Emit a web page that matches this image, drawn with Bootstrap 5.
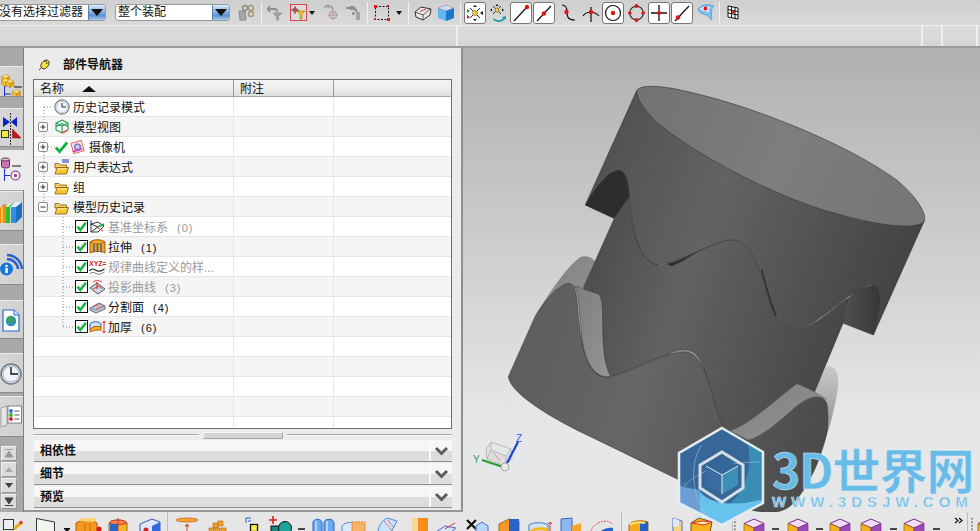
<!DOCTYPE html>
<html lang="zh">
<head>
<meta charset="utf-8">
<title>部件导航器</title>
<link href="https://cdn.jsdelivr.net/npm/bootstrap@5.3.0/dist/css/bootstrap.min.css" rel="stylesheet">
<style>
html,body{margin:0;width:980px;height:531px;overflow:hidden;background:#d8d8d8}
body{font:12px/1 "Liberation Sans","Noto Sans CJK SC",sans-serif;color:#111}
.app{position:relative;width:980px;height:531px;overflow:hidden}
svg{display:block;flex:none}
.flex-none{flex:none}
/* toolbars */
.bar1{height:26px;background:linear-gradient(#cfcfcf,#dadada);border-bottom:1px solid #f0f0f0}
.bar2{height:22px;background:linear-gradient(#dcdcdc,#d6d6d6);border-bottom:2px solid #9b9b9b}
.bar2 i{display:block;width:2px;height:20px;background:#efefef;position:absolute;top:26px}
.dv1{left:456px}.dv2{left:921px}.dv3{left:941px}.dv4{left:976px}
.combo{height:17px;background:#fff;border:1px solid #9a9a9a;border-radius:3px;overflow:hidden;flex:none;white-space:nowrap}
.combo1{width:109px;margin-left:-3px}
.combo2{width:115px;margin-left:9px;margin-right:5px}
.combo span{flex:1;padding-left:1px;line-height:15px}
.combo2 span{padding-left:2px}
.combo b{display:flex;align-items:center;justify-content:center;width:17px;height:100%;background:linear-gradient(#dcebfb,#5d93d3 70%,#a9c9ec);border-left:1px solid #5580b0}
.combo b::after{content:"";border:6px solid transparent;border-top:7px solid #111;border-bottom:0}
.tool{width:23px;height:24px;display:flex;align-items:center;justify-content:center;flex:none}
.tbtn{width:22px;height:22px;margin:1px 0 0 0;margin-right:1px;padding:0;background:#fff;border:1px solid #777;border-radius:3px;display:flex;align-items:center;justify-content:center;flex:none}
.tbtn:hover{background:#fff;border-color:#777}
.drop{width:8px;height:24px;flex:none;display:flex;align-items:center;justify-content:center}
.drop::after{content:"";border:3.5px solid transparent;border-top:4px solid #111;border-bottom:0}
.tsep{width:1px;height:22px;background:#f2f2f2;flex:none}
.m2{margin-left:2px}.m3{margin-left:3px}.m5{margin-left:5px}.mn2{margin-left:-2px}
/* rail */
.main{height:464px}
.rail{width:24px;flex:none;background:#a9a9a9;border-right:1px solid #7f7f7f;padding-top:18px}
.rtile{width:23px;background:linear-gradient(90deg,#d6d6d6,#d0d0d0);border-top:1px solid #ececec;border-bottom:1px solid #8a8a8a;overflow:hidden;flex:none}
.r1{height:31px}.r2{height:39px;margin-top:11px}.r3{height:40px;margin-top:3px;background:#ececec;border:0;width:24px}
.r4{height:40px;margin-top:1px}.r5{height:41px;margin-top:13px}.r6{height:39px;margin-top:15px}
.r7{height:40px;margin-top:14px}.r8{height:41px;margin-top:3px}
.rarrows{margin-top:9px;gap:1px;padding-left:1px}
.rarrows span{display:flex;align-items:center;justify-content:center;width:16px;height:15px;background:#dcdcdc;border:1px solid #f2f2f2;border-right-color:#999;border-bottom-color:#999}
/* navigator */
.panel{width:439px;flex:none;background:#ebebeb;border-right:2px solid #8f8f8f;border-bottom:2px solid #979797;padding:1px 0 0 9px;margin-top:0}
.phead{height:30px;gap:12px;padding-left:5px;font-weight:700}
.phead span{padding-top:2px}
.tbox{position:relative;width:419px;height:350px;background:#fff;border:1px solid #6f6f6f;flex:none;overflow:hidden}
.thead{height:17px;background:linear-gradient(#f4f4f4,#f0f0f0 45%,#dfdfdf);border-bottom:1px solid #a6a6a6}
.thead>div{height:100%;display:flex;align-items:center;border-right:1px solid #9a9a9a;padding-left:6px;padding-top:1px}
.c1{width:200px;flex:none}.c2{width:100px;flex:none}
.thead>div:last-child{flex:1;border:0}
.sortup{border:7px solid transparent;border-bottom:6px solid #111;border-top:0;margin-left:18px;width:0;height:0}
.trow{height:20px;border-bottom:1px solid #e6e6e6}
.trow:nth-child(odd){background:#f5f5f5}
.tcell{height:100%;border-right:1px solid #e6e6e6;display:flex;align-items:center;white-space:nowrap}
.tcell>span{padding-top:2px}
.lv0{padding-left:4px}.lv1{padding-left:41px}
.exp{width:10px;height:10px;margin-right:6px;position:relative;z-index:2}
.noexp{width:16px;flex:none}
.gap1{margin-right:3px}
.lv1 .gap1{margin-right:1px}
.ml2{margin-left:2px}
.off{color:#9a9a9a}
.cnt{font-size:11px;margin-left:9px;letter-spacing:1px}
.lines{position:absolute;left:0;top:0;pointer-events:none;z-index:1}
.hscroll{height:10px;margin-top:1px;width:419px;flex:none}
.hscroll u{display:block;flex:1;height:2px;background:#a9a9a9;border-bottom:1px solid #f8f8f8;text-decoration:none}
.hscroll s{display:block;width:80px;height:7px;margin:0 4px;background:#d4d4d4;border:1px solid #aaa;border-top-color:#f5f5f5;border-left-color:#f5f5f5}
.accs{width:418px;gap:1px;margin-left:1px}
.acc{height:22px;background:linear-gradient(#f6f6f6 50%,#dcdcdc 55%,#dedede);border-bottom:1px solid #8f8f8f;font-weight:700}
.acc span{padding-left:6px;flex:1;font-size:12px}
.acc em{width:23px;height:100%;border-left:2px solid #fafafa;display:flex;align-items:center;justify-content:center}
/* viewport */
.view{flex:1;background:linear-gradient(#b0b0b0,#e6e7e9 80%);position:relative;overflow:hidden}
.view svg{position:absolute;left:0;top:0}
/* bottom bar */
.bar3{height:19px;background:#e6e6e6;overflow:hidden}
.bsep{width:1px;height:19px;background:#bdbdbd;flex:none}
/* watermark */
.wmhex{position:absolute;left:675px;top:425px;z-index:5}
.wmtext{position:absolute;left:772px;top:445px;z-index:5;color:#69bbe7;font-weight:700;-webkit-text-stroke:.5px #dbeaf3;white-space:nowrap}
.wmbig{font-size:48px;line-height:46px;letter-spacing:-1px;font-family:"Noto Sans CJK SC",sans-serif}
.wmsmall{font-size:15px;line-height:15px;letter-spacing:5px;font-family:"Liberation Sans",sans-serif;margin-top:3px}
</style>
</head>
<body>
<svg width="0" height="0" class="position-absolute">
<defs>
<symbol id="chk" viewBox="0 0 13 13"><rect x=".5" y=".5" width="12" height="12" fill="#fff" stroke="#111"/><path d="M2.5 6.5 5.3 10 10.8 2.8" fill="none" stroke="#15b43c" stroke-width="2.6"/></symbol>
<symbol id="plus" viewBox="0 0 10 10"><rect x=".5" y=".5" width="9" height="9" rx="1.5" fill="#fff" stroke="#8a8a8a"/><path d="M2.5 5h5M5 2.5v5" stroke="#333"/></symbol>
<symbol id="minus" viewBox="0 0 10 10"><rect x=".5" y=".5" width="9" height="9" rx="1.5" fill="#fff" stroke="#8a8a8a"/><path d="M2.5 5h5" stroke="#333"/></symbol>
<symbol id="fold" viewBox="0 0 15 14"><path d="M1 2.5h4l1.5 1.5h6v3H1z" fill="#f6cf63" stroke="#7d5a10" stroke-width=".8"/><path d="M1 13 3 6.5h11.5L12.5 13z" fill="#f8c52e" stroke="#7d5a10" stroke-width=".8"/><path d="M3.2 8h9.5" stroke="#fff0b0"/></symbol>
<symbol id="cube3" viewBox="0 0 10 10"><path d="M5 .5 9.5 2.8 5 5 .5 2.8z" fill="#ffe27a" stroke="#b7861a" stroke-width=".6"/><path d="M.5 2.8 5 5v4.5L.5 7.2z" fill="#f5c12e" stroke="#b7861a" stroke-width=".6"/><path d="M9.5 2.8 5 5v4.5l4.5-2.3z" fill="#e8a318" stroke="#b7861a" stroke-width=".6"/></symbol>
<symbol id="pcube" viewBox="0 0 22 20"><path d="M11 1 21 5.5 11 10 1 5.500z" fill="#f2dcf5" stroke="#7b2a8f"/><path d="M1 5.500 11 10v9L1 14.500z" fill="#f3b21f" stroke="#8a5a10" stroke-width=".7"/><path d="M21 5.500 11 10v9l10-4.500z" fill="#9b4bb5" stroke="#7b2a8f" stroke-width=".7"/></symbol>
<linearGradient id="gs" gradientUnits="userSpaceOnUse" x1="90" y1="700" x2="1300" y2="1050"><stop offset="0" stop-color="#5c5c5c"/><stop offset=".35" stop-color="#666"/><stop offset="1" stop-color="#3f3f3f"/></linearGradient>
<linearGradient id="gu" gradientUnits="userSpaceOnUse" x1="350" y1="200" x2="1300" y2="550"><stop offset="0" stop-color="#505050"/><stop offset=".4" stop-color="#636363"/><stop offset="1" stop-color="#434343"/></linearGradient>
<linearGradient id="gc" gradientUnits="userSpaceOnUse" x1="320" y1="600" x2="1100" y2="850"><stop offset="0" stop-color="#4d4d4d"/><stop offset=".35" stop-color="#626262"/><stop offset="1" stop-color="#454545"/></linearGradient>
<linearGradient id="gt" gradientUnits="userSpaceOnUse" x1="470" y1="60" x2="1330" y2="450"><stop offset="0" stop-color="#727272"/><stop offset=".5" stop-color="#7d7d7d"/><stop offset="1" stop-color="#757575"/></linearGradient>
<linearGradient id="gb" x1="0" y1="0" x2="1" y2="1"><stop offset="0" stop-color="#7d7d7d"/><stop offset="1" stop-color="#969696"/></linearGradient>
<linearGradient id="gr" x1="0" y1="0" x2="0" y2="1"><stop offset="0" stop-color="#c9c9c9"/><stop offset="1" stop-color="#8e8e8e"/></linearGradient>
<linearGradient id="gp" x1="0" y1="0" x2="1" y2="0"><stop offset="0" stop-color="#505050"/><stop offset="1" stop-color="#383838"/></linearGradient>
</defs>
</svg>

<div class="app d-flex flex-column">
  <!-- top toolbar -->
  <div class="bar1 d-flex align-items-center flex-none">
    <div class="combo combo1 d-flex"><span>没有选择过滤器</span><b></b></div>
    <div class="combo combo2 d-flex"><span>整个装配</span><b></b></div>
    <div class="tool"><svg width="17" height="17" viewBox="0 0 17 17"><path d="M1 7h6l1 9H2z" fill="#a8a8a8" stroke="#8a8a8a"/><circle cx="7" cy="4" r="2.500" fill="none" stroke="#8f8f8f" stroke-width="1.500"/><circle cx="13" cy="4" r="2.500" fill="none" stroke="#a89a78" stroke-width="1.500"/><circle cx="13" cy="10" r="2.500" fill="none" stroke="#a89a78" stroke-width="1.500"/><path d="M7 6.500v3M10 4h1" stroke="#8f8f8f"/></svg></div>
    <div class="tsep m3"></div>
    <div class="tool m2"><svg width="17" height="17" viewBox="0 0 17 17"><path d="M3 2 .5 5 3 8M1 5h7q2 0 2 3" fill="none" stroke="#85908f" stroke-width="1.800"/><path d="M6 9h9l-3.500 3.500V16h-2v-3.500z" fill="#aaa395" stroke="#8c8678" stroke-width=".6"/></svg></div>
    <div class="tool"><svg width="17" height="17" viewBox="0 0 17 17"><rect x=".5" y=".5" width="16" height="16" fill="#dcdcdc" stroke="#d4474f"/><path d="M1 6h8M5 2v8" stroke="#7a3a3a"/><circle cx="5" cy="6" r="2" fill="none" stroke="#a83a3a"/><path d="M7 7h8l-3 3.500V15H10v-4.500z" fill="#f2c018" stroke="#8c7a20" stroke-width=".6"/></svg></div>
    <div class="drop mn2"></div>
    <div class="tool m3"><svg width="17" height="17" viewBox="0 0 17 17"><path d="M2 4 4.500 1.500 7 4M4.500 2C8 1 11 3 11 6" fill="none" stroke="#9a9a9a" stroke-width="1.500"/><circle cx="11" cy="11" r="3.500" fill="none" stroke="#b59595" stroke-width="1.100"/><path d="M11 6v10M6 11h10" stroke="#b59595"/></svg></div>
    <div class="tool"><svg width="17" height="17" viewBox="0 0 17 17"><path d="M1 3h3l1-1h3l2 1 3 4-2 1-2-2H5L4 5H1z" fill="#8f8f8f"/><path d="M11 8h4v8h-4z" fill="#aaa395"/><path d="M7 8h3v3H7z" fill="#999"/></svg></div>
    <div class="tsep m2"></div>
    <div class="tool m2"><svg width="18" height="18" viewBox="0 0 18 18"><rect x="2.500" y="2.500" width="13" height="13" fill="none" stroke="#111" stroke-dasharray="2 1.500"/><g fill="#d81f1f"><rect x="1" y="1" width="3" height="3"/><rect x="14" y="14" width="3" height="3"/><rect x="14" y="1" width="2" height="2"/><rect x="1" y="14" width="2" height="2"/></g></svg></div>
    <div class="drop m2"></div>
    <div class="tsep m5"></div>
    <div class="tool m2"><svg width="18" height="18" viewBox="0 0 18 18"><path d="M1 8 7 3l10 2-1 6-7 5-7-3z" fill="#e8e8e8" stroke="#333"/><path d="M1 8l8 3 7-6M9 11v5" fill="none" stroke="#333" stroke-width=".8"/><path d="M6 7.500 12 5" stroke="#d33"/></svg></div>
    <div class="tool"><svg width="18" height="18" viewBox="0 0 18 18"><path d="M9 1 17 4v10l-8 3-8-3V4z" fill="#62b8ee"/><path d="M9 1 17 4 9 7 1 4z" fill="#bfe6fb" stroke="#e65a6a" stroke-width=".5"/><path d="M9 7v10l8-3V4z" fill="#1c79c8"/></svg></div>
    <div class="tsep m3"></div>
    <button type="button" class="btn tbtn m3"><svg width="18" height="18" viewBox="0 0 18 18"><path d="M9 9 4 4M9 9l5-5M9 9l-5 5M9 9l5 5" stroke="#333"/><circle cx="9" cy="9" r="2.500" fill="#f6d42a" stroke="#555" stroke-width=".6"/><path d="M9 1 7 3h4zM9 17l-2-2h4z" fill="#111"/><path d="M1 5v4l3-2z" fill="#1aa83a"/><path d="M1 11v4l3-2z" fill="#d81f1f"/><path d="M17 7v4l-3-2z" fill="#111"/></svg></button>
    <div class="tool"><svg width="17" height="18" viewBox="0 0 17 18"><path d="M7 6 3 2M7 6l4-4M7 6 3 10M7 6l4 4" stroke="#333"/><circle cx="7" cy="6" r="2" fill="#f6d42a" stroke="#555" stroke-width=".5"/><path d="M7 0 5.500 2h3zM0 6l2-1.500v3zM14 6l-2-1.500v3z" fill="#111"/><path d="M4 14c2 3 7 3 9 0l-1-1 4-1v4l-1-1c-3 4-10 4-12 0z" fill="#1f9da8"/></svg></div>
    <button type="button" class="btn tbtn"><svg width="18" height="18" viewBox="0 0 18 18"><path d="M2 17 15 3" stroke="#111" stroke-width="1.200"/><circle cx="15" cy="3" r="2.200" fill="#e01414"/></svg></button>
    <button type="button" class="btn tbtn"><svg width="18" height="18" viewBox="0 0 18 18"><path d="M2 17 16 2" stroke="#111" stroke-width="1.200"/><circle cx="9" cy="9.500" r="2.200" fill="#e01414"/></svg></button>
    <div class="tool"><svg width="16" height="18" viewBox="0 0 16 18"><path d="M2 1c2 0 5 1 5 7s2 8 8 8" fill="none" stroke="#111" stroke-width="1.200"/><circle cx="6.500" cy="8" r="2.200" fill="#e01414"/></svg></div>
    <div class="tool"><svg width="18" height="18" viewBox="0 0 18 18"><path d="M1 12c3-5 12-5 16 0M9 3v15" fill="none" stroke="#111" stroke-width="1.200"/><circle cx="9" cy="8" r="2.200" fill="#e01414"/></svg></div>
    <button type="button" class="btn tbtn"><svg width="18" height="18" viewBox="0 0 18 18"><circle cx="9" cy="9" r="7.500" fill="none" stroke="#111" stroke-width="1.200"/><circle cx="9" cy="9" r="2.200" fill="#e01414"/></svg></button>
    <div class="tool"><svg width="17" height="18" viewBox="0 0 17 18"><circle cx="8.500" cy="9" r="6.800" fill="none" stroke="#222" stroke-width="1.100"/><g fill="#e01414"><circle cx="8.500" cy="2" r="2"/><circle cx="8.500" cy="16" r="2"/><circle cx="1.800" cy="9" r="1.800"/><circle cx="15.200" cy="9" r="1.800"/></g></svg></div>
    <button type="button" class="btn tbtn"><svg width="18" height="18" viewBox="0 0 18 18"><path d="M9 1v16M1 9h16" stroke="#111" stroke-width="1.300"/><circle cx="9" cy="9" r="2" fill="#e01414"/></svg></button>
    <button type="button" class="btn tbtn"><svg width="18" height="18" viewBox="0 0 18 18"><path d="M2 17 16 2" stroke="#111" stroke-width="1.200"/><circle cx="5" cy="13.500" r="2.200" fill="#e01414"/></svg></button>
    <div class="tool"><svg width="18" height="18" viewBox="0 0 18 18"><path d="M1 5c4-5 11-5 16-3-3 2-3 7-2 14-1 0-3-4-6-5-3-1-7-2-8-6z" fill="#7cbdf2" stroke="#4a8fd4" stroke-width=".7"/><path d="M2.500 5c3-3 8-3 11-2-2 1-2 4-2 6-3-2-6-2-9-4z" fill="#d9ecfb"/><circle cx="8.500" cy="4.500" r="1.900" fill="#e01414"/></svg></div>
    <div class="tsep m2"></div>
    <div class="tool m2"><svg width="13" height="15" viewBox="0 0 13 15"><path d="M1 1 11 3v11L1 12z" fill="#fff" stroke="#111"/><path d="M1 4.500l10 2M1 8l10 2M4.500 1.800v10.800M8 2.400v10.900" stroke="#111"/><circle cx="6.500" cy="7" r="1.500" fill="#e01414"/></svg></div>
  </div>
  <div class="bar2 flex-none"><i class="dv1"></i><i class="dv2"></i><i class="dv3"></i><i class="dv4"></i></div>

  <div class="main d-flex flex-none">
    <!-- icon rail -->
    <div class="rail d-flex flex-column flex-none">
      <div class="rtile r1"><svg width="23" height="31" viewBox="0 66 23 31"><use href="#cube3" x="1" y="73" width="9" height="9"/><use href="#cube3" x="1" y="77" width="9" height="9"/><use href="#cube3" x="5.500" y="78" width="9" height="9"/><path d="M4.500 85v11M4.500 93H11" stroke="#1f2fc0"/><path d="M14 86h8" stroke="#111"/><use href="#cube3" x="12" y="88" width="9" height="9"/></svg></div>
      <div class="rtile r2"><svg width="23" height="39" viewBox="0 108 23 39"><path d="M10.500 112v34" stroke="#333" stroke-dasharray="2 1"/><path d="M3 116 10 121 3 126zM17 116 11 121 17 126z" fill="#0b1fc4"/><rect x="1.500" y="129.500" width="7" height="7" fill="#f7e634" stroke="#333"/><path d="M12.500 128 21 137H12.500z" fill="#c9141b" stroke="#7a1010" stroke-width=".5"/></svg></div>
      <div class="rtile r3"><svg width="24" height="40" viewBox="0 150 24 40"><path d="M1.500 159.500v7c0 2 8 2 8 0v-7z" fill="#c876b5" stroke="#60304f"/><ellipse cx="5.500" cy="159.500" rx="4" ry="1.500" fill="#e6bdd8" stroke="#60304f"/><path d="M12 166h9" stroke="#111"/><path d="M4.500 169v12M4.500 175.500H10" stroke="#1f2fc0" stroke-width="1.100"/><circle cx="15.500" cy="175.500" r="4.500" fill="none" stroke="#8e2c8e" stroke-width="1.100"/><circle cx="15.500" cy="175.500" r="1.500" fill="#8e2c8e"/></svg></div>
      <div class="rtile r4"><svg width="23" height="40" viewBox="0 191 23 40"><path d="M0 207l4-4h2v19H0z" fill="#f08a1a"/><path d="M2 206v16" stroke="#f7d24a" stroke-width="1.500"/><path d="M6 206l4-4h3l-3 4v16H6z" fill="#27c22a"/><path d="M6 206l4-4h2l-4 4z" fill="#fff"/><path d="M11 206h5v16h-5z" fill="#2f8fe0"/><path d="M11 206l5-5h6l-5 5z" fill="#e8f2fb"/><path d="M16 206l6-5v15l-6 6z" fill="#1c6ec0"/></svg></div>
      <div class="rtile r5"><svg width="23" height="41" viewBox="0 244 23 41"><path d="M7 254a15 15 0 0 1 15 14" fill="none" stroke="#2a62c8" stroke-width="2.500"/><path d="M7 258a11 11 0 0 1 11 10" fill="none" stroke="#2a62c8" stroke-width="2.500"/><circle cx="6.500" cy="268" r="6.500" fill="#1576dc"/><circle cx="6.500" cy="265" r="1.300" fill="#fff"/><rect x="5.300" y="267" width="2.500" height="5" fill="#fff"/></svg></div>
      <div class="rtile r6"><svg width="23" height="39" viewBox="0 300 23 39"><path d="M3 309h11l5 5v16H3z" fill="#fff" stroke="#1f6ad0" stroke-width="1.200"/><path d="M14 309v5h5" fill="#dbe9fa" stroke="#1f6ad0"/><circle cx="11" cy="320" r="5.200" fill="#2f8fbd"/><path d="M8 316c3-1 5 1 5 3s-3 3-4 2-3-3-1-5zM14 323c1 0 2-2 2-2" fill="#3aa83a" stroke="#3aa83a" stroke-width=".5"/></svg></div>
      <div class="rtile r7"><svg width="23" height="40" viewBox="0 353 23 40"><circle cx="11" cy="373" r="10" fill="#dfe7f2" stroke="#777" stroke-width="1.500"/><circle cx="11" cy="373" r="8" fill="#eef4fb" stroke="#9fb5d4"/><path d="M11 366v7h7" fill="none" stroke="#111" stroke-width="1.400"/></svg></div>
      <div class="rtile r8"><svg width="23" height="41" viewBox="0 396 23 41"><path d="M1 407l6-2v19l-6 2z" fill="#e6e6e6" stroke="#888" stroke-width=".7"/><rect x="8" y="405" width="13.500" height="17" fill="#fff" stroke="#555" stroke-width=".7"/><circle cx="11" cy="410" r="1.900" fill="#2a6ce0"/><circle cx="11" cy="414" r="1.900" fill="#2fb52f"/><circle cx="11" cy="418" r="1.900" fill="#d81f1f"/><path d="M14.500 410h5M14.500 414h5M14.500 418h5" stroke="#555"/></svg></div>
      <div class="rarrows d-flex flex-column">
        <span><svg width="10" height="9" viewBox="0 0 10 9"><path d="M1 .5h8M5 2 1 8h8z" fill="#999" stroke="#999"/></svg></span>
        <span><svg width="10" height="9" viewBox="0 0 10 9"><path d="M5 2 1 7h8z" fill="#aaa"/></svg></span>
        <span><svg width="10" height="9" viewBox="0 0 10 9"><path d="M5 7 1 2h8z" fill="#444"/></svg></span>
        <span><svg width="10" height="9" viewBox="0 0 10 9"><path d="M1 8.500h8M5 7 1 1h8z" fill="#444" stroke="#444"/></svg></span>
      </div>
    </div>

    <!-- part navigator -->
    <div class="panel d-flex flex-column flex-none">
      <div class="phead d-flex align-items-center flex-none">
        <svg width="13" height="13" viewBox="0 0 13 13"><path d="M1 12l2-2" stroke="#333"/><path d="M3 9c-1-3 2-6 5-7 2 0 3 1 3 3 0 3-3 6-6 6z" fill="#f6e23a" stroke="#333"/><path d="M6 3c2 0 3 1 3 3" stroke="#333" fill="none"/></svg>
        <span>部件导航器</span>
      </div>
      <div class="tbox d-flex flex-column">
        <div class="thead d-flex flex-none"><div class="c1"><span>名称</span><span class="sortup"></span></div><div class="c2">附注</div><div></div></div>
        <div class="tbody">
          <svg class="lines" width="416" height="348" viewBox="34 80 416 348"><g stroke="#8a8a8a" stroke-dasharray="1 2" fill="none"><path d="M44 107v100M44 107h9M48 147h7M63 217v110M63 227h11M63 247h11M63 267h11M63 287h11M63 307h11M63 327h11"/></g></svg>
          <div class="trow d-flex"><div class="tcell c1 lv0"><span class="noexp"></span><svg class="gap1" width="16" height="16" viewBox="0 0 16 16"><circle cx="8" cy="8" r="7.200" fill="#dfe7f2" stroke="#666"/><circle cx="8" cy="8" r="5.500" fill="#f4f8fc" stroke="#9fb5d4" stroke-width=".7"/><path d="M8 4v4h4" fill="none" stroke="#222"/></svg><span>历史记录模式</span></div><div class="tcell c2"></div></div>
          <div class="trow d-flex"><div class="tcell c1 lv0"><svg class="exp"><use href="#plus"/></svg><svg class="gap1" width="16" height="16" viewBox="0 0 16 16"><path d="M8 1 14 4v7l-6 3-6-3V4zM2 4l6 3 6-3M8 7v7M2 7.500l6-3 6 3" fill="none" stroke="#18a04c" stroke-width="1.100"/><path d="M8 14l5-2.500" stroke="#e2503a" stroke-width="1.400"/></svg><span>模型视图</span></div><div class="tcell c2"></div></div>
          <div class="trow d-flex"><div class="tcell c1 lv0"><svg class="exp"><use href="#plus"/></svg><svg width="15" height="14" viewBox="0 0 16 14"><path d="M2 7.500 6 12 14 2" fill="none" stroke="#12b23a" stroke-width="3"/></svg><svg class="gap1" width="17" height="16" viewBox="0 0 18 16"><path d="M2 4l11-3 3 11-11 3z" fill="#fbe2ef" stroke="#ef5a4a"/><circle cx="9" cy="8" r="3.500" fill="#8fa8d8" stroke="#6a4aa8" stroke-width=".7"/><circle cx="9" cy="8" r="1.500" fill="#dde"/><path d="M4 13l10-3" stroke="#d02fc0" stroke-width="1.500"/></svg><span>摄像机</span></div><div class="tcell c2"></div></div>
          <div class="trow d-flex"><div class="tcell c1 lv0"><svg class="exp"><use href="#plus"/></svg><svg class="gap1" width="16" height="16" viewBox="0 0 16 16"><use href="#fold" y="2" width="15" height="14"/><path d="M8 1h7M8 3h7" stroke="#1f2fc0"/></svg><span>用户表达式</span></div><div class="tcell c2"></div></div>
          <div class="trow d-flex"><div class="tcell c1 lv0"><svg class="exp"><use href="#plus"/></svg><svg class="gap1" width="16" height="16" viewBox="0 0 16 16"><use href="#fold" y="2" width="15" height="14"/></svg><span>组</span></div><div class="tcell c2"></div></div>
          <div class="trow d-flex"><div class="tcell c1 lv0"><svg class="exp"><use href="#minus"/></svg><svg class="gap1" width="16" height="16" viewBox="0 0 16 16"><use href="#fold" y="2" width="15" height="14"/></svg><span>模型历史记录</span></div><div class="tcell c2"></div></div>
          <div class="trow d-flex"><div class="tcell c1 lv1"><svg class="gap1" width="13" height="13"><use href="#chk"/></svg><svg width="17" height="16" viewBox="0 0 17 16"><path d="M2 1v5" stroke="#1f2fc0"/><path d="M2 5 9 8 2 13z M2 5l7-2 6 4-6 6-7 0" fill="none" stroke="#333"/><path d="M9 8l6-3" stroke="#1a9a3a" stroke-width="1.500"/><path d="M9 9l5 3" stroke="#c33"/></svg><span class="off ml2">基准坐标系<span class="cnt">(0)</span></span></div><div class="tcell c2"></div></div>
          <div class="trow d-flex"><div class="tcell c1 lv1"><svg class="gap1" width="13" height="13"><use href="#chk"/></svg><svg width="17" height="16" viewBox="0 0 17 16"><path d="M1 3c4-3 11-3 15 0v11c-4-2-11-2-15 0z" fill="#f7a51c" stroke="#a25a10"/><path d="M1 3c4 2 11 2 15 0" fill="#ffd65a" stroke="#a25a10"/><path d="M5 5v8M8.500 5v8M12 5v8" stroke="#1c5ab8" stroke-width="1.300"/></svg><span class="ml2">拉伸<span class="cnt">(1)</span></span></div><div class="tcell c2"></div></div>
          <div class="trow d-flex"><div class="tcell c1 lv1"><svg class="gap1" width="13" height="13"><use href="#chk"/></svg><svg width="17" height="16" viewBox="0 0 17 16"><path d="M.5 12c3-4 5-1 8 0s5-1 7-2" fill="none" stroke="#222" stroke-width="1.200"/><path d="M.5 15c3-3 5-1 8 0s5-1 7-2" fill="none" stroke="#222" stroke-width=".6"/><text x="0" y="7" font-size="7" font-weight="700" fill="#d02020" font-family="Liberation Sans">XYZ=</text></svg><span class="off ml2">规律曲线定义的样...</span></div><div class="tcell c2"></div></div>
          <div class="trow d-flex"><div class="tcell c1 lv1"><svg class="gap1" width="13" height="13"><use href="#chk"/></svg><svg width="17" height="16" viewBox="0 0 17 16"><path d="M1 9 8 4l8 6-7 5z" fill="#cfd9ea" stroke="#555"/><path d="M4 3c3-2 6-2 9 0" fill="none" stroke="#d33"/><path d="M8 3v7" stroke="#d33" stroke-width="1.200"/><path d="M4 10l6-3 3 3" fill="none" stroke="#d33"/></svg><span class="off ml2">投影曲线<span class="cnt">(3)</span></span></div><div class="tcell c2"></div></div>
          <div class="trow d-flex"><div class="tcell c1 lv1"><svg class="gap1" width="13" height="13"><use href="#chk"/></svg><svg width="17" height="16" viewBox="0 0 17 16"><path d="M1 9 10 4l6 3v3l-9 4-6-3z" fill="#b9c8dc" stroke="#667"/><path d="M1 9l6 2 9-4" fill="none" stroke="#889"/><path d="M4 8l7-3" stroke="#e06a60"/><path d="M7 10l7-3" stroke="#e06a60"/></svg><span class="ml2">分割面<span class="cnt">(4)</span></span></div><div class="tcell c2"></div></div>
          <div class="trow d-flex"><div class="tcell c1 lv1"><svg class="gap1" width="13" height="13"><use href="#chk"/></svg><svg width="17" height="16" viewBox="0 0 17 16"><path d="M1 5c2-3 9-3 11 0v3c-4-1-8-1-11 3z" fill="#cfe3f5" stroke="#2a62a8"/><path d="M1 11c3-4 7-4 11-3v3c-4 0-8 0-11 2z" fill="#f7b71c" stroke="#c05a10"/><path d="M15 2v12M13.500 4 15 2l1.500 2M13.500 12 15 14l1.500-2" fill="none" stroke="#d33"/></svg><span class="ml2">加厚<span class="cnt">(6)</span></span></div><div class="tcell c2"></div></div>
          <div class="trow d-flex"><div class="tcell c1"></div><div class="tcell c2"></div></div>
          <div class="trow d-flex"><div class="tcell c1"></div><div class="tcell c2"></div></div>
          <div class="trow d-flex"><div class="tcell c1"></div><div class="tcell c2"></div></div>
          <div class="trow d-flex"><div class="tcell c1"></div><div class="tcell c2"></div></div>
          <div class="trow d-flex"><div class="tcell c1"></div><div class="tcell c2"></div></div>
        </div>
      </div>
      <div class="hscroll d-flex align-items-center"><u></u><s></s><u></u></div>
      <div class="accs d-flex flex-column">
        <div class="acc d-flex align-items-center"><span>相依性</span><em><svg width="15" height="10" viewBox="0 0 15 10"><path d="M2 2l5.500 5.500L13 2" fill="none" stroke="#5c5c5c" stroke-width="3"/></svg></em></div>
        <div class="acc d-flex align-items-center"><span>细节</span><em><svg width="15" height="10" viewBox="0 0 15 10"><path d="M2 2l5.500 5.500L13 2" fill="none" stroke="#5c5c5c" stroke-width="3"/></svg></em></div>
        <div class="acc d-flex align-items-center"><span>预览</span><em><svg width="15" height="10" viewBox="0 0 15 10"><path d="M2 2l5.500 5.500L13 2" fill="none" stroke="#5c5c5c" stroke-width="3"/></svg></em></div>
      </div>
    </div>

    <!-- 3D viewport -->
    <div class="view">
      <svg width="517" height="464" viewBox="463 48 517 464">
        <g transform="translate(480 70) scale(.33333)" stroke-linejoin="round">
          <!-- back walls of lower sleeve -->
          <path d="M165 740C200 680 260 590 300 562 320 552 340 565 345 575L310 655 240 655Z" fill="url(#gb)"/>
          <path d="M1040 888C1060 888 1072 895 1075 930 1076 960 1055 1060 1035 1110L1000 965Z" fill="url(#gr)"/>
          <!-- core -->
          <path d="M402 445 445 370 450 400C455 460 470 570 540 585 640 560 700 510 760 510 830 520 840 620 870 700 890 760 930 780 960 775 1020 760 1070 700 1110 680L1090 760 1005 965 950 1040 800 1150 500 1100 300 950 310 650Z" fill="url(#gc)"/>
          <!-- upper sleeve -->
          <path d="M470 62 316 405 402 445 445 375 418 300C440 305 445 340 450 400 455 460 470 570 530 585 640 565 700 510 760 510 830 520 840 620 870 700 890 760 930 780 960 775 1020 760 1110 660 1170 645 1195 650 1200 690 1195 730L1180 795 1333 452C1320 480 800 340 540 165 500 130 470 90 470 62Z" fill="url(#gu)" stroke="#333" stroke-width="2"/>
          <!-- left pocket -->
          <path d="M316 405C340 360 385 300 418 300 440 305 445 340 448 380L402 445Z" fill="#2d2d2d"/>
          <!-- right pocket -->
          <path d="M1110 680C1130 660 1170 640 1190 650 1200 670 1200 700 1195 730L1180 795 1090 760Z" fill="url(#gp)" stroke="#333" stroke-width="1.500"/>
          <path d="M560 582C600 575 640 550 685 528 650 545 620 570 575 588Z" fill="#2a2a2a"/>
          <path d="M845 600C855 640 870 690 888 738 870 700 860 650 845 600Z" fill="#2a2a2a" stroke="#2a2a2a" stroke-width="3"/>
          <!-- cap -->
          <path d="M470 62C480 45 530 45 600 60 800 100 1100 220 1250 330 1310 380 1340 430 1333 452 1320 480 1200 475 1000 410 800 340 620 230 540 165 500 130 470 90 470 62Z" fill="url(#gt)" stroke="#3a3a3a" stroke-width="2"/>
          <!-- lower sleeve front -->
          <path d="M85 920 165 740C200 680 245 640 268 640 290 645 290 680 298 760 310 880 340 925 385 922 450 905 530 860 590 845 640 835 670 880 690 950 710 1010 720 1075 750 1082 810 1080 890 1000 960 985 1010 970 1040 980 1042 1010 1048 1060 1040 1100 1029 1131 1010 1200 969 1270 940 1300 900 1340 840 1330 780 1310 700 1285 500 1180 300 1085 170 1020 90 960 85 920Z" fill="url(#gs)" stroke="#333" stroke-width="1.500"/>
          <!-- inner wall bands -->
          <path d="M285 648 355 672C365 680 368 700 368 760 368 830 372 880 392 920 350 925 325 890 312 840 300 790 300 690 285 648Z" fill="url(#gb)" stroke="#333" stroke-width="1.500"/>
          <path d="M560 853C590 838 630 830 650 855 665 875 672 895 680 915 665 880 640 840 605 846Z" fill="#8c8c8c" stroke="#333" stroke-width="1"/>
          <path d="M750 1082C810 1065 890 985 950 942 975 950 1005 965 1040 988 1005 970 975 985 930 1025 890 1060 845 1100 805 1110Z" fill="url(#gb)" stroke="#555" stroke-width="1"/>
        </g>
        <!-- triad -->
        <g fill="none">
          <path d="M491 442 511 449 512 459 505 466 487 459 486 449ZM491 442 491 450 506 456 511 449M491 450 487 459M506 456 505 466" stroke="#b9b9b9" fill="#dadada" fill-opacity=".7"/>
          <path d="M493 452 500 461" stroke="#d99a9a"/>
          <path d="M482 460 503 467" stroke="#2e9a2e" stroke-width="2"/>
          <path d="M507 463 518 442" stroke="#1342d8" stroke-width="2.200"/>
          <circle cx="505" cy="467" r="4" fill="#e8e8e8" stroke="#aaa"/>
        </g>
        <text x="516" y="442" font-size="10" fill="#2a5ae0" font-family="Liberation Sans">Z</text>
        <text x="473" y="463" font-size="10" fill="#3a9a5a" font-family="Liberation Sans">Y</text>
      </svg>
    </div>
  </div>

  <!-- bottom toolbar -->
  <div class="bar3 d-flex flex-none">
    <svg width="167" height="19" viewBox="0 513 167 19">
      <rect x="3.500" y="520.500" width="10" height="10" fill="#eee" stroke="#333"/><path d="M14 530l8-7" stroke="#e8a81c" stroke-width="3"/><path d="M20 524.500l2-2" stroke="#d33" stroke-width="3"/>
      <path d="M36.500 519.500 54.500 523V533H36.500z" fill="#eef6ee" stroke="#333"/>
      <path d="M64 530h6l-3 3z" fill="#111"/><path d="M64 529.500h6" stroke="#111"/>
      <path d="M76 524c3-3 19-3 21 0v9H76z" fill="#f39a1c" stroke="#b05a10"/><path d="M78 522l4-3h14l-2 4z" fill="#ffd271"/><path d="M85 524v9M90 524v9" stroke="#d06a14"/><circle cx="99" cy="530" r="2.500" fill="#e01414"/>
      <path d="M109 533v-9c2-4 16-4 18 0v9z" fill="#f4b428" stroke="#a86a14"/><path d="M109 524c2-4 16-4 18 0-4 2-14 2-18 0z" fill="#f58a4a" stroke="#c33"/><rect x="110" y="525" width="8" height="8" fill="#2a62c8"/><path d="M118 519v14" stroke="#c33"/>
      <path d="M140 525l12-5 8 3v11h-20z" fill="#dfe9fb" stroke="#3a5ab0"/><path d="M152 527l8-4v11h-8z" fill="#2f6ae0"/><circle cx="146" cy="531" r="2.500" fill="#d02020"/>
    </svg>
    <div class="bsep"></div>
    <svg width="453" height="19" viewBox="168 513 453 19">
      <ellipse cx="187" cy="521" rx="11" ry="2" fill="#f4a72a" stroke="#d0552a" stroke-width=".7"/><path d="M187 533v-8l-2 2h4l-2-2" fill="#f08a1a" stroke="#d0552a"/>
      <g fill="#f0a02a" stroke="#b06a14" stroke-width=".6"><rect x="213" y="524" width="5" height="5"/><rect x="218" y="522" width="5" height="5"/><rect x="209" y="529" width="5" height="5"/><rect x="215" y="529" width="5" height="5"/><rect x="221" y="529" width="5" height="5"/></g>
      <rect x="250.500" y="525.500" width="7" height="7" fill="#fbf04a" stroke="#111" stroke-width="1.300"/><path d="M246 519h5M246 519v5M248 522h3" stroke="#2a62c8" fill="none"/>
      <path d="M269 519h8M273 515v8" stroke="#d81f1f" stroke-width="1.600" transform="translate(0 2)"/><rect x="271" y="527" width="10" height="8" fill="#17877f" stroke="#111"/><circle cx="285" cy="529" r="6.500" fill="#1fa598" stroke="#111"/>
      <path d="M298 530h7M300 530h3" stroke="#111" stroke-width="1.500"/>
      <path d="M313 533v-9c0-5 9-5 9 0v9zM324 533v-9c0-5 10-5 10 0v9z" fill="#6aa8f2" stroke="#2a62c8"/><path d="M316 522v11M327 522v11" stroke="#fff"/>
      <path d="M342 527c3-4 10-4 14-3v10h-14z" fill="#d8eafb" stroke="#4a8ad4"/><rect x="352" y="523" width="13" height="10" fill="#f8b46a" stroke="#e87a1a" stroke-dasharray="2 1"/>
      <path d="M378 533c0-6 4-11 9-14l10 3-6 11z" fill="#c9e3fb" stroke="#4a8ad4"/><path d="M384 522l9 11M388 521l6 8" stroke="#e05050" stroke-dasharray="2 1"/>
      <rect x="412" y="519" width="16" height="14" fill="#f58f1a"/><rect x="412" y="519" width="6" height="14" fill="#fad59a"/>
      <path d="M436 533l9-6 11 2-5 4z" fill="#d4e4fb" stroke="#4a6ad4"/><path d="M445 530l10-6" stroke="#d33"/>
      <path d="M467 521l9 9M476 521l-9 9" stroke="#111" stroke-width="2.200"/><path d="M476 527l6-4 6 4v6h-12z" fill="#b9d6f8" stroke="#4a6ad4"/>
      <path d="M499 525l10-5 10 2v11h-20z" fill="#f59a2a" stroke="#a86a14"/><path d="M509 520h10v13h-10z" fill="#2a62c8"/>
      <path d="M529 526c3-3 16-3 19 0v7h-19z" fill="#cfe3f5" stroke="#3a7ac8"/><path d="M531 533c3-4 12-4 17-2" stroke="#f7b71c" stroke-width="3" fill="none"/><path d="M550 523v10M548 525l2-2 2 2" stroke="#d33" fill="none"/>
      <path d="M561 520l11-1v14h-11z" fill="#8db8ef" stroke="#3a62c8"/><path d="M572 527l9-3v9h-9z" fill="#f5a52a"/>
      <path d="M591 533c0-6 8-11 16-11l6 3" fill="none" stroke="#e05050" stroke-dasharray="2 1"/><path d="M600 533c2-3 8-5 13-4v4z" fill="#2a62c8"/>
    </svg>
    <div class="bsep"></div>
    <svg width="110" height="19" viewBox="622 513 110 19">
      <path d="M629 526c3-5 14-5 19-3v10h-19z" fill="#f6a91c" stroke="#a86a14"/><path d="M640 523h8v10h-8z" fill="#1c62c8"/><path d="M630 526c3-3 12-3 15-2" stroke="#ffe27a" stroke-width="2" fill="none"/>
      <path d="M673 519l9 3v11h-9z" fill="#f8d47a" stroke="#4a6ad4"/><path d="M673 519l6 2v6l-6 1z" fill="#dfeafb"/>
      <path d="M691 524l8-5 13 4-2 10h-19z" fill="#f6b41c" stroke="#7a4a14"/><path d="M691 524l11-2 10 1-8 3z" fill="#ffe9a0" stroke="#c33"/><path d="M694 516l12-2 7 4-10 2z" fill="#b4f0f0" opacity=".7"/>
    </svg>
    <div class="bsep"></div>
    <svg width="234" height="19" viewBox="733 513 234 19">
      <path d="M735 519v12" stroke="#666" stroke-dasharray="1.500 2" stroke-width="1.500"/>
      <use href="#pcube" x="743" y="519" width="22" height="20"/><path d="M772 530h7" stroke="#111" stroke-width="1.500"/>
      <use href="#pcube" x="787" y="519" width="22" height="20"/><path d="M816 530h7" stroke="#111" stroke-width="1.500"/>
      <use href="#pcube" x="829" y="519" width="22" height="20"/>
      <use href="#pcube" x="860" y="519" width="22" height="20"/><path d="M890 530h7" stroke="#111" stroke-width="1.500"/>
      <use href="#pcube" x="903" y="519" width="22" height="20"/><path d="M933 530h7" stroke="#111" stroke-width="1.500"/>
      <path d="M955 519l3 2.500-3 2.500M959 519l3 2.500-3 2.500" fill="none" stroke="#111" stroke-width="1.200"/>
    </svg>
    <div class="bsep"></div>
    <svg width="12" height="19" viewBox="968 513 12 19">
      <path d="M972 519v12" stroke="#666" stroke-dasharray="1.500 2" stroke-width="1.500"/>
      <use href="#pcube" x="977" y="519" width="22" height="20"/>
    </svg>
  </div>

  <!-- watermark overlay -->
  <svg class="wmhex" width="95" height="104" viewBox="675 425 95 104">
    <clipPath id="hexc"><path d="M722 428 763 452V503L722 525 679 503V453Z"/></clipPath>
    <g clip-path="url(#hexc)">
      <rect x="675" y="425" width="95" height="104" fill="#36689c" fill-opacity=".95"/>
      <path d="M741 425C756 455 752 490 722 510L770 530V425Z" fill="#3a8eb6"/>
      <path d="M675 484C685 488 695 489 700 490L704 516 722 530H675Z" fill="#6c9fd5"/>
      <path d="M700 492C708 502 725 505 745 503L770 498V530H700Z" fill="#68c3ec"/>
      <path d="M684 486C700 470 725 462 760 462M702 445C690 460 690 495 708 518" fill="none" stroke="#9ec3dd" stroke-opacity=".6"/>
    </g>
    <path d="M722 428 763 452V503L722 525 679 503V453Z" fill="none" stroke="#e4ecf2" stroke-width="2.500"/>
    <path d="M722 452 743 465V488L722 502 700 488V465Z" fill="none" stroke="#d6dfe6" stroke-width="3"/>
    <path d="M722 457 738 466 722 475 706 466Z" fill="#35669a"/>
    <path d="M706 466 722 475V494L706 485Z" fill="#3a6ca3"/>
    <path d="M738 466 722 475V494L738 485Z" fill="#3c8fb5"/>
    <path d="M722 475V494M706 466 722 475 738 466" stroke="#dfe9f0" fill="none"/>
  </svg>
  <div class="wmtext"><div class="wmbig">3D世界网</div><div class="wmsmall">WWW.3DSJW.COM</div></div>
</div>
<script src="https://cdn.jsdelivr.net/npm/bootstrap@5.3.0/dist/js/bootstrap.bundle.min.js"></script>
</body>
</html>
